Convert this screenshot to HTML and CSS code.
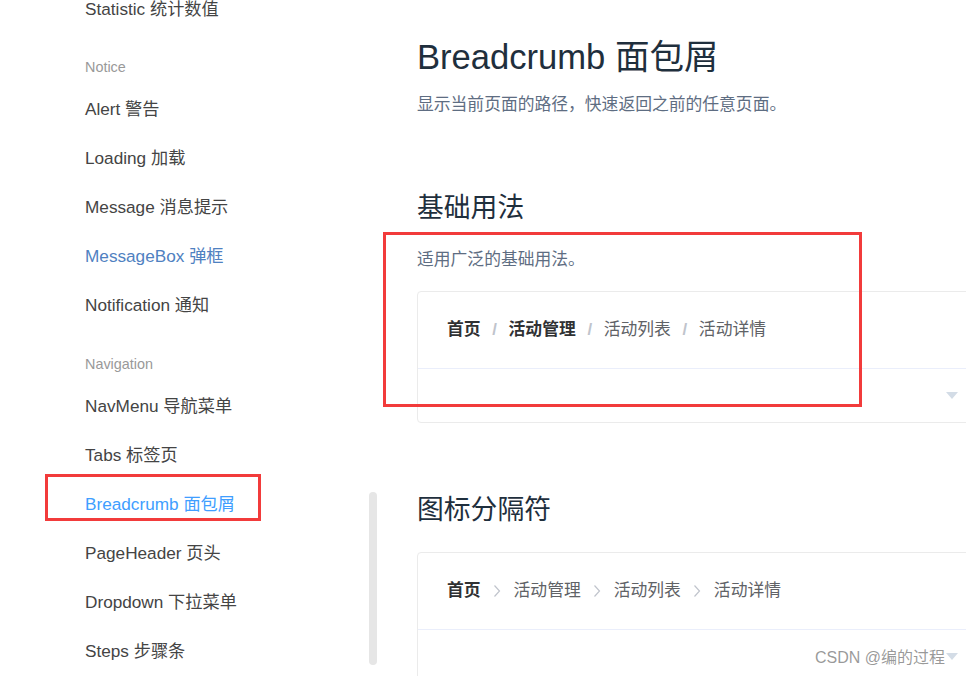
FILE: index.html
```html
<!DOCTYPE html>
<html lang="zh-CN">
<head>
<meta charset="utf-8">
<title>Breadcrumb 面包屑</title>
<link rel="stylesheet" href="styles.css">
</head>
<body>
<div class="page">
  <aside class="sidebar">
    <ul class="nav">
      <li class="nav-item first">Statistic 统计数值</li>
      <li class="nav-group">Notice</li>
      <li class="nav-item">Alert 警告</li>
      <li class="nav-item">Loading 加载</li>
      <li class="nav-item">Message 消息提示</li>
      <li class="nav-item visited">MessageBox 弹框</li>
      <li class="nav-item">Notification 通知</li>
      <li class="nav-group">Navigation</li>
      <li class="nav-item">NavMenu 导航菜单</li>
      <li class="nav-item">Tabs 标签页</li>
      <li class="nav-item active">Breadcrumb 面包屑</li>
      <li class="nav-item">PageHeader 页头</li>
      <li class="nav-item">Dropdown 下拉菜单</li>
      <li class="nav-item">Steps 步骤条</li>
    </ul>
    <div class="scrollbar"></div>
  </aside>
  <main class="content">
    <h2 class="title">Breadcrumb 面包屑</h2>
    <p class="lead">显示当前页面的路径，快速返回之前的任意页面。</p>

    <h3 class="section">基础用法</h3>
    <p class="desc">适用广泛的基础用法。</p>
    <div class="demo">
      <div class="source">
        <div class="crumbs">
          <span class="crumb link">首页</span><span class="sep">/</span>
          <span class="crumb link">活动管理</span><span class="sep">/</span>
          <span class="crumb">活动列表</span><span class="sep">/</span>
          <span class="crumb">活动详情</span>
        </div>
      </div>
      <div class="control"><span class="caret"></span></div>
    </div>

    <h3 class="section section-2">图标分隔符</h3>
    <div class="demo demo-2">
      <div class="source">
        <div class="crumbs">
          <span class="crumb link">首页</span><svg class="chev" viewBox="0 0 12 14" width="12" height="14"><polyline points="3.5,1.5 8.5,7 3.5,12.5"/></svg>
          <span class="crumb">活动管理</span><svg class="chev" viewBox="0 0 12 14" width="12" height="14"><polyline points="3.5,1.5 8.5,7 3.5,12.5"/></svg>
          <span class="crumb">活动列表</span><svg class="chev" viewBox="0 0 12 14" width="12" height="14"><polyline points="3.5,1.5 8.5,7 3.5,12.5"/></svg>
          <span class="crumb">活动详情</span>
        </div>
      </div>
      <div class="control"><span class="caret"></span></div>
    </div>
  </main>
  <div class="mark mark-nav"></div>
  <div class="mark mark-demo"></div>
  <div class="watermark">CSDN @编的过程</div>
</div>
</body>
</html>
```

FILE: styles.css
```css
* { box-sizing: border-box; }
html, body {
  margin: 0;
  padding: 0;
  background: #fff;
  overflow: hidden;
}
body {
  font-family: "Liberation Sans", Arial, "Noto Sans CJK SC", sans-serif;
  width: 966px;
  height: 676px;
}
.page {
  position: relative;
  display: flex;
  width: 966px;
  height: 676px;
  overflow: hidden;
}
.sidebar {
  position: relative;
  flex: 0 0 380px;
  height: 676px;
}
.nav {
  list-style: none;
  margin: 0;
  padding: 0 0 0 85px;
}
.nav-item {
  font-size: 17.2px;
  line-height: 49px;
  height: 49px;
  color: #444;
  white-space: nowrap;
}
.nav-item.first {
  line-height: 18px;
  height: 33px;
}
.nav-item.visited { color: #4f81c1; }
.nav-item.active { color: #409eff; }
.nav-group {
  font-size: 14.4px;
  line-height: 26px;
  height: 26px;
  margin: 21px 0 5px;
  color: #999;
}
.scrollbar {
  position: absolute;
  left: 369px;
  top: 492px;
  width: 8px;
  height: 173px;
  border-radius: 4px;
  background: #e6e6e6;
}
.mark {
  position: absolute;
  border: 3px solid #f23b3b;
  pointer-events: none;
}
.mark-nav {
  left: 45px;
  top: 474px;
  width: 216px;
  height: 47px;
}
.mark-demo {
  left: 383px;
  top: 232px;
  width: 479px;
  height: 175px;
}
.content {
  position: relative;
  flex: 1 1 auto;
  padding: 37px 0 0 37px;
  overflow: hidden;
}
.title {
  margin: 0;
  font-size: 34.6px;
  line-height: 40px;
  font-weight: 400;
  color: #1f2f3d;
  white-space: nowrap;
}
.lead, .desc {
  margin: 16px 0 0;
  font-size: 16.8px;
  line-height: 24px;
  color: #5e6d82;
  white-space: nowrap;
}
.section {
  margin: 73px 0 0;
  font-size: 26.8px;
  line-height: 36px;
  font-weight: 400;
  color: #1f2f3d;
}
.desc { margin-top: 22px; }
.demo {
  width: 1070px;
  margin-top: 19px;
  border: 1px solid #ebebeb;
  border-radius: 4px;
}
.source {
  padding: 29px 29px;
  border-bottom: 1px solid #eaeefb;
}
.crumbs {
  display: flex;
  align-items: center;
  height: 18px;
  font-size: 16.8px;
  line-height: 18px;
  white-space: nowrap;
}
.crumb { color: #606266; }
.crumb.link { color: #303133; font-weight: 700; }
.sep {
  display: inline-block;
  width: 6px;
  margin: 0 11px;
  text-align: center;
  color: #c0c4cc;
  font-weight: 700;
}
.chev {
  margin: 0 10.5px;
  fill: none;
  stroke: #c0c4cc;
  stroke-width: 1.2;
}
.control {
  height: 53px;
  display: flex;
  align-items: center;
  justify-content: center;
}
.caret {
  width: 0;
  height: 0;
  border-left: 6px solid transparent;
  border-right: 6px solid transparent;
  border-top: 7px solid #d3dce6;
}
.section-2 { margin-top: 69px; }
.demo-2 { margin-top: 24px; }
.watermark {
  position: absolute;
  left: 815px;
  top: 647px;
  font-size: 16px;
  line-height: 22px;
  color: rgba(120, 120, 120, 0.75);
  white-space: nowrap;
}
```
